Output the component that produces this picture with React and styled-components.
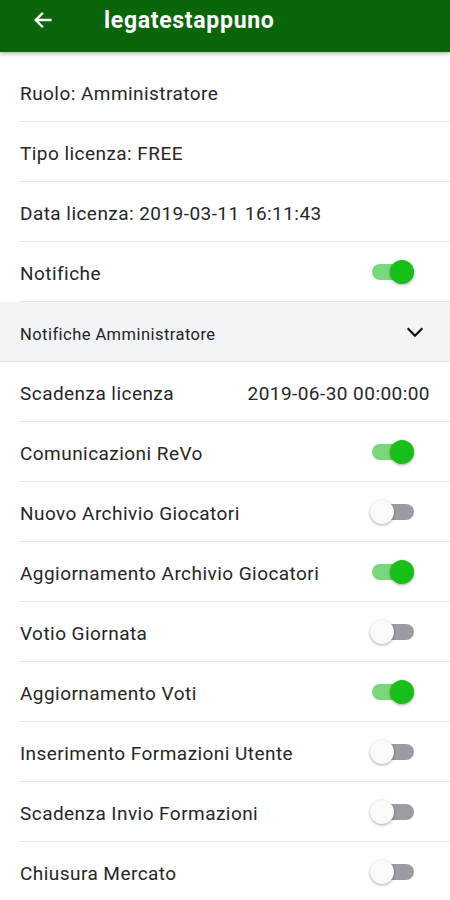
import React from 'react';
import styled, {createGlobalStyle} from "styled-components";

const Global = createGlobalStyle`
  body {
    margin: 0;
    background: #ffffff;
    font-family: Roboto, "Noto Sans", sans-serif;
    color: #222;
  }
`

const Page = styled.div`
  width: 450px;
  height: 900px;
  overflow: hidden;
  background: #fff;
`

const Header = styled.header`
  height: 52px;
  padding-bottom: 12px;
  box-sizing: border-box;
  background: #0a650b;
  display: flex;
  align-items: center;
  color: #fff;
  box-shadow: 0 2px 4px rgba(0, 0, 0, 0.28);
  position: relative;
  z-index: 1;
`

const Back = styled.div`
  width: 104px;
  padding-left: 32px;
  box-sizing: border-box;
  display: flex;
  align-items: center;
`

const Title = styled.h1`
  margin: 0;
  font-size: 23px;
  font-weight: 700;
  letter-spacing: 0.7px;
`

const List = styled.div`
  padding-top: 10px;
`

const Row = styled.div`
  height: 60px;
  display: flex;
  align-items: center;
  justify-content: space-between;
  padding: 0 20px;
  font-size: 19px;
  letter-spacing: 0.45px;
  color: #262626;
  position: relative;

  &::after {
    content: '';
    position: absolute;
    left: 20px;
    right: 0;
    bottom: 0;
    height: 1px;
    background: #e4e4e4;
  }
`

const Label = styled.span`
  padding-top: 2px;
`

const Section = styled.div`
  height: 60px;
  display: flex;
  align-items: center;
  justify-content: space-between;
  padding: 0 24px 0 20px;
  background: #f3f4f8;
  font-size: 16.5px;
  letter-spacing: 0.45px;
  color: #222;
  border-bottom: 1px solid #e2e2e2;
  box-sizing: border-box;
`

const SectionLabel = styled.span`
  padding-top: 5px;
`

const Value = styled.span`
  font-size: 19px;
  letter-spacing: 0.45px;
  color: #262626;
  padding-top: 2px;
`

const Track = styled.div`
  width: 42px;
  height: 16px;
  border-radius: 8px;
  margin-right: 16px;
  position: relative;
  background: ${p => p.$on ? '#79d97a' : '#9c9ca4'};
`

const Thumb = styled.div`
  position: absolute;
  top: -4px;
  left: ${p => p.$on ? '18px' : '-2px'};
  width: 24px;
  height: 24px;
  border-radius: 50%;
  background: ${p => p.$on ? '#18bf18' : '#fafafa'};
  box-shadow: 0 1px 3px rgba(0, 0, 0, 0.35);
`

const Toggle = ({on}) => (
    <Track $on={on}>
        <Thumb $on={on}/>
    </Track>
)

const info = [
    'Ruolo: Amministratore',
    'Tipo licenza: FREE',
    'Data licenza: 2019-03-11 16:11:43',
]

const admin = [
    ['Comunicazioni ReVo', true],
    ['Nuovo Archivio Giocatori', false],
    ['Aggiornamento Archivio Giocatori', true],
    ['Votio Giornata', false],
    ['Aggiornamento Voti', true],
    ['Inserimento Formazioni Utente', false],
    ['Scadenza Invio Formazioni', false],
    ['Chiusura Mercato', false],
]

const App = () => {
    return (
        <Page>
            <Global/>
            <Header>
                <Back>
                    <svg width="22" height="22" viewBox="0 0 24 24" fill="none" stroke="#fff" strokeWidth="2.6" strokeLinecap="square">
                        <path d="M20 12H5M11 5l-7 7 7 7"/>
                    </svg>
                </Back>
                <Title>legatestappuno</Title>
            </Header>
            <List>
                {info.map((t, i) => <Row key={i}><Label>{t}</Label></Row>)}
                <Row>
                    <Label>Notifiche</Label>
                    <Toggle on/>
                </Row>
                <Section>
                    <SectionLabel>Notifiche Amministratore</SectionLabel>
                    <svg width="22" height="22" viewBox="0 0 24 24" fill="none" stroke="#111" strokeWidth="2.4">
                        <path d="M4 8l8 8 8-8"/>
                    </svg>
                </Section>
                <Row>
                    <Label>Scadenza licenza</Label>
                    <Value>2019-06-30 00:00:00</Value>
                </Row>
                {admin.map(([t, on], i) => (
                    <Row key={i}>
                        <Label>{t}</Label>
                        <Toggle on={on}/>
                    </Row>
                ))}
            </List>
        </Page>
    )
};

export default App;
